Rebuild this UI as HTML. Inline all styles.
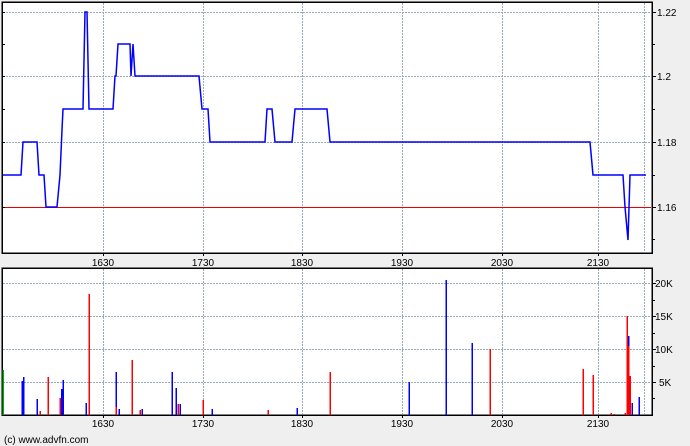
<!DOCTYPE html>
<html><head><style>
html,body{margin:0;padding:0;background:#efefef;width:690px;height:446px;overflow:hidden;font-family:"Liberation Sans",sans-serif;}
svg text{font-family:"Liberation Sans",sans-serif;font-size:10px;fill:#000;}
</style></head><body>
<svg width="690" height="446" viewBox="0 0 690 446" shape-rendering="crispEdges">
<rect x="2" y="2" width="650" height="251" fill="#fff" stroke="#000" stroke-width="1.5"/>
<rect x="2" y="268" width="650" height="147" fill="#fff" stroke="#000" stroke-width="1.5"/>
<g stroke="#9ab" stroke-width="1" stroke-dasharray="2,1">
<line x1="3" y1="12.5" x2="651" y2="12.5"/><line x1="3" y1="76.5" x2="651" y2="76.5"/><line x1="3" y1="142.5" x2="651" y2="142.5"/>
<line x1="3" y1="283.5" x2="651" y2="283.5"/><line x1="3" y1="316.5" x2="651" y2="316.5"/><line x1="3" y1="349.5" x2="651" y2="349.5"/><line x1="3" y1="382.5" x2="651" y2="382.5"/>
<line x1="103.5" y1="3" x2="103.5" y2="252"/><line x1="203.5" y1="3" x2="203.5" y2="252"/><line x1="302.5" y1="3" x2="302.5" y2="252"/><line x1="402.5" y1="3" x2="402.5" y2="252"/><line x1="502.5" y1="3" x2="502.5" y2="252"/><line x1="598.5" y1="3" x2="598.5" y2="252"/><line x1="644.5" y1="3" x2="644.5" y2="252"/>
<line x1="103.5" y1="269" x2="103.5" y2="414"/><line x1="203.5" y1="269" x2="203.5" y2="414"/><line x1="302.5" y1="269" x2="302.5" y2="414"/><line x1="402.5" y1="269" x2="402.5" y2="414"/><line x1="502.5" y1="269" x2="502.5" y2="414"/><line x1="598.5" y1="269" x2="598.5" y2="414"/><line x1="644.5" y1="269" x2="644.5" y2="414"/>
</g>
<line x1="3" y1="207.5" x2="651" y2="207.5" stroke="#e00" stroke-width="1"/>
<g stroke="#000" stroke-width="1">
<line x1="652" y1="12.5" x2="656" y2="12.5"/><line x1="652" y1="44.5" x2="655" y2="44.5"/><line x1="652" y1="76.5" x2="656" y2="76.5"/><line x1="652" y1="109.5" x2="655" y2="109.5"/><line x1="652" y1="142.5" x2="656" y2="142.5"/><line x1="652" y1="175.5" x2="655" y2="175.5"/><line x1="652" y1="207.5" x2="656" y2="207.5"/><line x1="652" y1="239.5" x2="655" y2="239.5"/>
<line x1="2" y1="12.5" x2="5" y2="12.5"/><line x1="2" y1="44.5" x2="5" y2="44.5"/><line x1="2" y1="76.5" x2="5" y2="76.5"/><line x1="2" y1="109.5" x2="5" y2="109.5"/><line x1="2" y1="142.5" x2="5" y2="142.5"/><line x1="2" y1="207.5" x2="5" y2="207.5"/>
<line x1="652" y1="283.5" x2="656" y2="283.5"/><line x1="652" y1="316.5" x2="656" y2="316.5"/><line x1="652" y1="349.5" x2="656" y2="349.5"/><line x1="652" y1="382.5" x2="656" y2="382.5"/><line x1="652" y1="300.5" x2="655" y2="300.5"/><line x1="652" y1="333.5" x2="655" y2="333.5"/><line x1="652" y1="366.5" x2="655" y2="366.5"/><line x1="652" y1="398.5" x2="655" y2="398.5"/>
<line x1="103.5" y1="253" x2="103.5" y2="256"/><line x1="203.5" y1="253" x2="203.5" y2="256"/><line x1="302.5" y1="253" x2="302.5" y2="256"/><line x1="402.5" y1="253" x2="402.5" y2="256"/><line x1="502.5" y1="253" x2="502.5" y2="256"/><line x1="598.5" y1="253" x2="598.5" y2="256"/>
<line x1="103.5" y1="415" x2="103.5" y2="418"/><line x1="203.5" y1="415" x2="203.5" y2="418"/><line x1="302.5" y1="415" x2="302.5" y2="418"/><line x1="402.5" y1="415" x2="402.5" y2="418"/><line x1="502.5" y1="415" x2="502.5" y2="418"/><line x1="598.5" y1="415" x2="598.5" y2="418"/>
</g>
<polyline shape-rendering="auto" fill="none" stroke="#00f" stroke-width="1.5" points="3,175 21,175 23,142 37,142 39,175 44,175 46,207 57,207 60,175 62,130 63,109 83,109 85,12 87,12 89,109 113,109 115,76 116,76 118,44 130,44 131,76 133,44 135,76 199,76 202,109 208,109 210,142 265,142 267,109 272,109 275,142 292,142 295,109 327,109 330,142 590,142 593,175 623,175 625,207 628,240 630,175 646,175"/>
<g stroke-width="1.5">
<line x1="22" y1="415" x2="22" y2="381" stroke="#00f"/><line x1="23.5" y1="415" x2="23.5" y2="377" stroke="#00f"/>
<line x1="37" y1="415" x2="37" y2="399" stroke="#00f"/><line x1="40" y1="415" x2="40" y2="411" stroke="#f00"/>
<line x1="48" y1="415" x2="48" y2="377" stroke="#f00"/><line x1="60" y1="415" x2="60" y2="398" stroke="#f00"/><line x1="61.5" y1="415" x2="61.5" y2="389" stroke="#00f"/><line x1="63" y1="415" x2="63" y2="380" stroke="#00f"/>
<line x1="86" y1="415" x2="86" y2="403" stroke="#00f"/><line x1="89" y1="415" x2="89" y2="294" stroke="#f00"/>
<line x1="116" y1="415" x2="116" y2="372" stroke="#00f"/><line x1="116" y1="415" x2="116" y2="407" stroke="#f00"/><line x1="119" y1="415" x2="119" y2="409" stroke="#00f"/>
<line x1="132" y1="415" x2="132" y2="360" stroke="#f00"/><line x1="140" y1="415" x2="140" y2="410" stroke="#f00"/><line x1="142" y1="415" x2="142" y2="409" stroke="#00f"/>
<line x1="172" y1="415" x2="172" y2="372" stroke="#00f"/><line x1="176" y1="415" x2="176" y2="388" stroke="#00f"/><line x1="178" y1="415" x2="178" y2="404" stroke="#f00"/><line x1="180" y1="415" x2="180" y2="404" stroke="#00f"/>
<line x1="203" y1="415" x2="203" y2="400" stroke="#f00"/><line x1="212" y1="415" x2="212" y2="409" stroke="#00f"/>
<line x1="268" y1="415" x2="268" y2="410" stroke="#f00"/><line x1="297" y1="415" x2="297" y2="408" stroke="#00f"/><line x1="330" y1="415" x2="330" y2="372" stroke="#f00"/>
<line x1="409" y1="415" x2="409" y2="382" stroke="#00f"/><line x1="446" y1="415" x2="446" y2="280" stroke="#00f"/><line x1="472" y1="415" x2="472" y2="343" stroke="#00f"/><line x1="490" y1="415" x2="490" y2="349" stroke="#f00"/>
<line x1="583" y1="415" x2="583" y2="369" stroke="#f00"/><line x1="593" y1="415" x2="593" y2="375" stroke="#f00"/><line x1="611" y1="415" x2="611" y2="413" stroke="#f00"/><line x1="614" y1="415" x2="614" y2="414" stroke="#f00"/>
<line x1="625" y1="415" x2="625" y2="413" stroke="#f00"/><line x1="627" y1="415" x2="627" y2="316" stroke="#f00"/><line x1="628.5" y1="415" x2="628.5" y2="336" stroke="#f00"/><line x1="628.5" y1="346" x2="628.5" y2="336" stroke="#00f"/>
<line x1="630" y1="415" x2="630" y2="376" stroke="#f00"/><line x1="632" y1="415" x2="632" y2="403" stroke="#00f"/><line x1="639" y1="415" x2="639" y2="397" stroke="#00f"/>
<line x1="3" y1="415" x2="3" y2="370" stroke="#0a0"/>
</g>
<text x="657" y="16">1.22</text><text x="657" y="80">1.2</text><text x="657" y="146">1.18</text><text x="657" y="211">1.16</text>
<text x="655" y="287">20K</text><text x="655" y="320">15K</text><text x="655" y="353">10K</text><text x="659" y="386">5K</text>
<g text-anchor="middle"><text x="103" y="266">1630</text><text x="203" y="266">1730</text><text x="302" y="266">1830</text><text x="402" y="266">1930</text><text x="502" y="266">2030</text><text x="598" y="266">2130</text>
<text x="103" y="427">1630</text><text x="203" y="427">1730</text><text x="302" y="427">1830</text><text x="402" y="427">1930</text><text x="502" y="427">2030</text><text x="598" y="427">2130</text></g>
<text x="4" y="443">(c) www.advfn.com</text>
</svg>
</body></html>
